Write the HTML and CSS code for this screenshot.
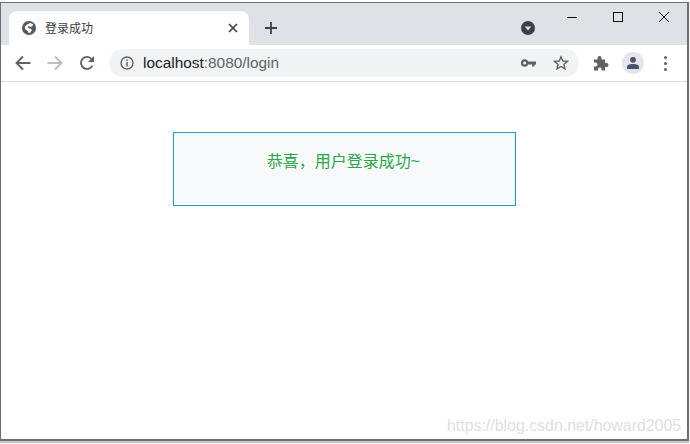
FILE: index.html
```html
<!DOCTYPE html>
<html lang="zh-CN">
<head>
  <meta charset="UTF-8">
  <title>登录成功</title>
  <link rel="stylesheet" href="styles.css">
</head>
<body>
  <div class="window">
    <!-- Tab strip -->
    <div class="tabstrip">
      <div class="tab">
        <svg class="favicon" width="14" height="14" viewBox="0 0 14 14">
          <circle cx="7" cy="7" r="7" fill="#54585d"/>
          <path d="M8 2 L11 3 L10.6 5 L8.6 5.9 L6.6 5 L5.6 6.3 L7.2 7.4 L9.2 7.8 L9.8 9.2 L8.2 11.8 L6.6 12 L5.8 10 L3.4 8.6 L2.6 6 L5 3.4 Z" fill="#fff"/>
        </svg>
        <span class="tab-title">登录成功</span>
        <svg class="tab-close" width="10" height="10" viewBox="0 0 10 10">
          <path d="M1 1 L9 9 M9 1 L1 9" stroke="#3c4043" stroke-width="1.7"/>
        </svg>
      </div>
      <svg class="new-tab" width="12" height="12" viewBox="0 0 12 12">
        <path d="M6 0 V12 M0 6 H12" stroke="#3c4043" stroke-width="1.8"/>
      </svg>
      <div class="strip-right">
        <svg class="tab-search" width="14" height="14" viewBox="0 0 14 14">
          <circle cx="7" cy="7" r="7" fill="#3c4043"/>
          <path d="M3.8 5.5 H10.2 L7 9.6 Z" fill="#dee1e6"/>
        </svg>
        <div class="win-controls">
          <svg class="win-btn" width="46" height="30" viewBox="0 0 46 30"><path d="M18 14.5 H28" stroke="#111" stroke-width="1"/></svg>
          <svg class="win-btn" width="46" height="30" viewBox="0 0 46 30"><rect x="18.5" y="9.5" width="9" height="9" fill="none" stroke="#111" stroke-width="1"/></svg>
          <svg class="win-btn" width="46" height="30" viewBox="0 0 46 30"><path d="M18 9 L28 19 M28 9 L18 19" stroke="#111" stroke-width="1"/></svg>
        </div>
      </div>
    </div>

    <!-- Toolbar -->
    <div class="toolbar">
      <svg class="nav-icon" width="16" height="16" viewBox="0 0 16 16">
        <path d="M15.5 8 H2 M8 1.5 L1.5 8 L8 14.5" fill="none" stroke="#5f6368" stroke-width="1.9"/>
      </svg>
      <svg class="nav-icon" width="16" height="16" viewBox="0 0 16 16">
        <path d="M0.5 8 H14 M8 1.5 L14.5 8 L8 14.5" fill="none" stroke="#babcbe" stroke-width="1.9"/>
      </svg>
      <svg class="nav-icon" width="16" height="16" viewBox="0 0 16 16">
        <path d="M13.4 10.6 A6 6 0 1 1 12.6 4" fill="none" stroke="#5f6368" stroke-width="1.9"/>
        <path d="M15 1 V7 H9 Z" fill="#5f6368"/>
      </svg>
      <div class="omnibox">
        <svg class="info-icon" width="14" height="14" viewBox="0 0 14 14">
          <circle cx="7" cy="7" r="6" fill="none" stroke="#5f6368" stroke-width="1.4"/>
          <path d="M7 6 V10.5 M7 3.4 V5" stroke="#5f6368" stroke-width="1.5"/>
        </svg>
        <span class="url"><span class="host">localhost</span>:8080/login</span>
        <svg class="key-icon" width="15" height="8" viewBox="0 0 15 8">
          <circle cx="3.6" cy="4" r="2.6" fill="none" stroke="#5f6368" stroke-width="2.2"/>
          <path d="M6 2.6 H15 V5.4 H13.6 V7.4 H11.2 V5.4 H6 Z" fill="#5f6368"/>
        </svg>
        <svg class="star-icon" width="16" height="16" viewBox="0 0 16 16">
          <path d="M8 1.8 L9.8 6 L14.4 6.4 L10.9 9.4 L12 13.9 L8 11.5 L4 13.9 L5.1 9.4 L1.6 6.4 L6.2 6 Z" fill="none" stroke="#5f6368" stroke-width="1.4"/>
        </svg>
      </div>
      <svg class="puzzle-icon" width="16" height="16" viewBox="0 0 16 16">
        <path d="M1 4.5 H4.5 V3 A2 2 0 0 1 8.5 3 V4.5 H12 V8 H13.5 A2 2 0 0 1 13.5 12 H12 V15.5 H8.5 V14 A1.8 1.8 0 0 0 5 14 V15.5 H1 V11.5 H2.5 A2 2 0 0 0 2.5 7.5 H1 Z" fill="#5f6368"/>
      </svg>
      <div class="avatar">
        <svg width="14" height="14" viewBox="0 0 14 14">
          <circle cx="7" cy="3.8" r="2.9" fill="#45536d"/>
          <path d="M1 13 V11 C1 8.8 4.2 8 7 8 C9.8 8 13 8.8 13 11 V13 Z" fill="#45536d"/>
        </svg>
      </div>
      <div class="menu-dots"><i></i><i></i><i></i></div>
    </div>

    <!-- Page content -->
    <div class="page">
      <div class="alert">恭喜，用户登录成功~</div>
    </div>
  </div>
  <div class="watermark">https://blog.csdn.net/howard2005</div>
</body>
</html>
```

FILE: styles.css
```css
html, body {
  margin: 0;
  padding: 0;
}
body {
  width: 690px;
  height: 444px;
  overflow: hidden;
  background-color: #fff;
  font-family: "Liberation Sans", "Noto Sans CJK SC", sans-serif;
  padding-top: 2px;
  box-sizing: border-box;
}
.window {
  width: 689px;
  height: 439px;
  box-sizing: border-box;
  border: 1px solid #6e6e6e;
  border-bottom-width: 2px;
  border-right-width: 2px;
  display: flex;
  flex-direction: column;
  background-color: #fff;
  box-shadow: 0 2px 1px #c8c8c8;
}
.tabstrip {
  height: 42px;
  flex: none;
  display: flex;
  align-items: flex-end;
  background-color: #dee1e6;
  padding-left: 8px;
}
.tab {
  width: 240px;
  height: 34px;
  box-sizing: border-box;
  background-color: #fff;
  border-radius: 8px 8px 0 0;
  display: flex;
  align-items: center;
  padding: 0 11px 0 13px;
}
.favicon {
  flex: none;
}
.tab-title {
  margin: 0 0 2px 9px;
  font-size: 12px;
  color: #3c4043;
  flex: 1;
}
.new-tab {
  margin: 0 0 11px 16px;
}
.strip-right {
  flex: 1;
  align-self: stretch;
  display: flex;
  justify-content: flex-end;
  position: relative;
}
.tab-search {
  margin: 18px 152px 0 0;
}
.win-controls {
  position: absolute;
  top: 0;
  right: 0;
  display: flex;
}
.toolbar {
  height: 36px;
  flex: none;
  box-sizing: border-box;
  display: flex;
  align-items: center;
  padding-left: 14px;
  background-color: #fff;
}
.nav-icon {
  flex: none;
  margin-right: 16px;
}
.nav-icon:nth-child(3) {
  margin-right: 14px;
}
.omnibox {
  width: 470px;
  height: 28px;
  flex: none;
  box-sizing: border-box;
  background-color: #f1f3f4;
  border-radius: 14px;
  display: flex;
  align-items: center;
  padding: 0 10px 0 11px;
}
.info-icon {
  flex: none;
}
.url {
  margin-left: 9px;
  flex: 1;
  font-size: 15.4px;
  color: #5f6368;
}
.host {
  color: #202124;
}
.key-icon {
  margin-right: 17px;
}
.puzzle-icon {
  flex: none;
  margin-left: 14px;
}
.avatar {
  width: 22px;
  height: 22px;
  flex: none;
  margin-left: 13px;
  border-radius: 50%;
  background-color: #e3e5ea;
  display: flex;
  align-items: center;
  justify-content: center;
}
.menu-dots {
  margin-left: 20px;
  display: flex;
  flex-direction: column;
  gap: 3px;
}
.menu-dots i {
  width: 3px;
  height: 3px;
  border-radius: 50%;
  background-color: #5f6368;
}
.page {
  flex: 1;
  border-top: 1px solid #dadce0;
  padding: 50px 0 0 172px;
}
.alert {
  width: 343px;
  height: 74px;
  box-sizing: border-box;
  border: 1px solid #17a2b8;
  background-color: #f8f9fa;
  color: #28a745;
  font-size: 16px;
  line-height: 24px;
  padding: 17px 2px 0 0;
  text-align: center;
}
.watermark {
  position: absolute;
  left: 447px;
  top: 417px;
  font-size: 15.9px;
  color: #e0e0e0;
}
```
